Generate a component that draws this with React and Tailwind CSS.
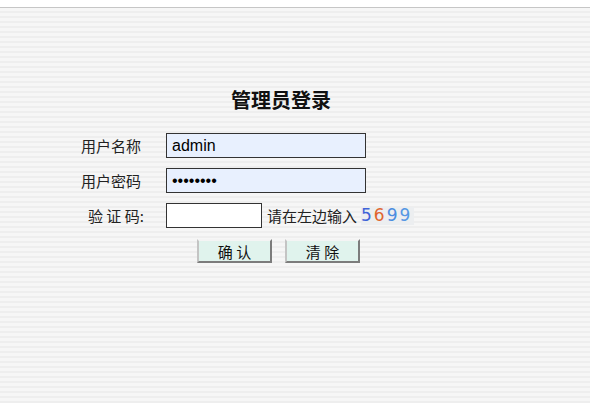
import React from 'react';

// login page for the admin area
const cjk = "font-['Noto_Sans_CJK_SC','Noto_Sans',sans-serif]";

const Field = ({ label, labelPad = '', children }) => (
  <div className="flex h-[35px] items-center">
    <div className={`w-[85px] shrink-0 text-[15px] leading-none text-[#222] ${labelPad}`}>{label}</div>
    {children}
  </div>
);

const Btn = ({ children }) => (
  <button
    type="button"
    className="h-[24px] w-[75px] border-2 border-t-[#f4f4f4] border-l-[#c4c4c4] border-r-[#7c7c7c] border-b-[#7c7c7c] bg-[#e0f3ed] pt-[2px] text-[15px] leading-none text-[#111]"
  >
    {children}
  </button>
);

export default function App() {
  return (
    <div className={`min-h-screen bg-white ${cjk}`}>
      <div className="h-[7px] bg-white" />
      <div className="h-px bg-[#c6c6c6]" />
      <div className="h-[395px] bg-[repeating-linear-gradient(to_bottom,#f6f6f6_0px,#f6f6f6_3px,#eeeeee_3px,#eeeeee_5px)] pt-[78px]">
        <h1 className="ml-[231px] h-[28px] text-[20px] font-bold leading-[28px] text-[#111]">管理员登录</h1>
        <div className="mt-[14px] ml-[81px]">
          <Field label="用户名称">
            <input
              readOnly
              value="admin"
              className="h-[25px] w-[200px] border border-[#333] bg-[#e8f0fe] px-[5px] font-['Liberation_Sans',sans-serif] text-[16px] text-black outline-none"
            />
          </Field>
          <Field label="用户密码">
            <input
              readOnly
              type="password"
              value="12345678"
              className="h-[25px] w-[200px] border border-[#333] bg-[#e8f0fe] px-[5px] font-['Liberation_Sans',sans-serif] text-[16px] text-black outline-none"
            />
          </Field>
          <Field label="验 证 码:" labelPad="pl-[7px]">
            <input
              readOnly
              className="h-[25px] w-[96px] border border-[#333] bg-white outline-none"
            />
            <span className="ml-[5px] text-[15px] leading-none text-[#222]">请在左边输入</span>
            <span className="ml-[4px] flex h-[18px] items-center bg-[#eceef0] pr-[2px] font-['DejaVu_Sans',sans-serif] text-[17px] leading-none tracking-[2px]">
              <span className="text-[#3f63d8]">5</span>
              <span className="text-[#e0652f]">6</span>
              <span className="text-[#4b8de0]">9</span>
              <span className="text-[#5597e4]">9</span>
            </span>
          </Field>
          <div className="flex h-[35px] items-center gap-[13px] pl-[116px]">
            <Btn>确 认</Btn>
            <Btn>清 除</Btn>
          </div>
        </div>
      </div>
    </div>
  );
}
